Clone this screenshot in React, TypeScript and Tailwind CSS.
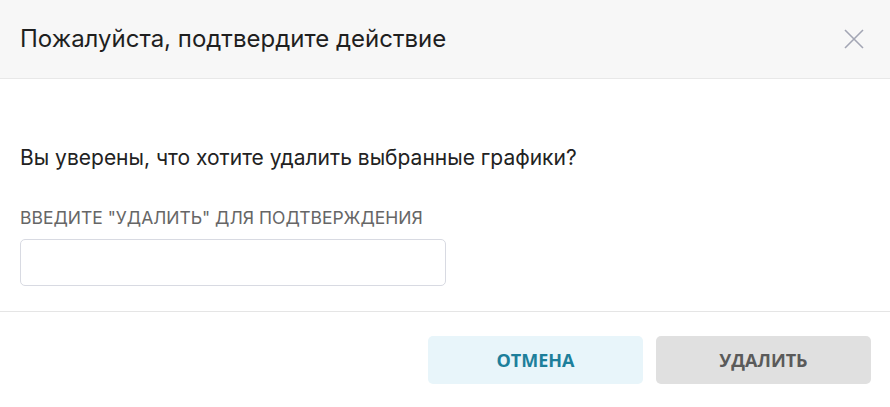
export default function App() {
  return (
    <div className="flex h-[407px] w-[890px] flex-col bg-white font-['Inter',sans-serif]">
      <div className="flex h-[79px] shrink-0 items-center justify-between border-b border-[#e8e8e8] bg-[#f7f7f7] pl-5 pr-[24px]">
        <h2 className="text-[24px] leading-[30px] font-normal text-[#1f1f1f]">
          Пожалуйста, подтвердите действие
        </h2>
        <button className="flex h-6 w-6 items-center justify-center text-[#a3a6b4]">
          <svg width="22" height="22" viewBox="0 0 22 22" fill="none" stroke="currentColor" strokeWidth="1.6">
            <path d="M2 2L20 20M20 2L2 20" />
          </svg>
        </button>
      </div>

      <div className="flex flex-col px-5 pt-[65px] pb-[25px]">
        <p className="text-[21px] leading-[28px] text-[#222]">
          Вы уверены, что хотите удалить выбранные графики?
        </p>
        <label className="mt-[35px] block">
          <span className="block text-[17.5px] leading-[22px] uppercase text-[#666]">
            Введите "удалить" для подтверждения
          </span>
          <input className="mt-[10px] h-[47px] w-[426px] rounded-[5px] border border-[#d8dae2] bg-white px-3 text-[16px] outline-none" />
        </label>
      </div>

      <div className="flex flex-1 items-start justify-end gap-[13px] border-t border-[#e5e5e5] px-[19px] pt-[24px]">
        <button className="h-[48px] w-[215px] rounded-[5px] bg-[#e8f5fa] font-['Open_Sans',sans-serif] text-[18px] font-bold text-[#1d7f9b]">
          ОТМЕНА
        </button>
        <button className="h-[48px] w-[215px] rounded-[5px] bg-[#e0e0e0] font-['Open_Sans',sans-serif] text-[18px] font-bold text-[#5a5a5a]">
          УДАЛИТЬ
        </button>
      </div>
    </div>
  );
}
